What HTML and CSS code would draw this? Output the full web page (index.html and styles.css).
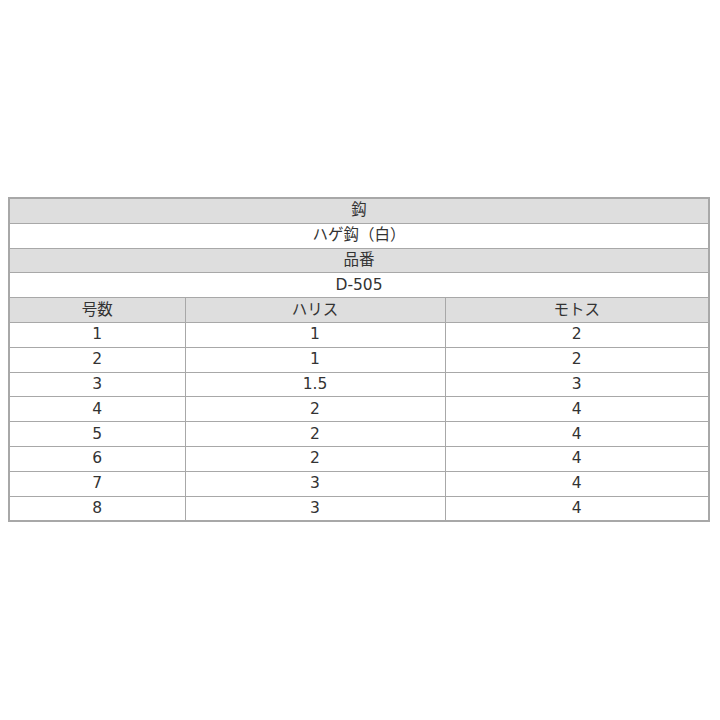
FILE: index.html
```html
<!DOCTYPE html>
<html lang="ja">
<head>
<meta charset="utf-8">
<link rel="stylesheet" href="styles.css">
</head>
<body>
<table class="spec">
  <colgroup>
    <col class="c1">
    <col class="c2">
    <col class="c3">
  </colgroup>
  <tr class="head"><td colspan="3">鈎</td></tr>
  <tr><td colspan="3">ハゲ鈎（白）</td></tr>
  <tr class="head"><td colspan="3">品番</td></tr>
  <tr><td colspan="3">D-505</td></tr>
  <tr class="head"><td>号数</td><td>ハリス</td><td>モトス</td></tr>
  <tr><td>1</td><td>1</td><td>2</td></tr>
  <tr><td>2</td><td>1</td><td>2</td></tr>
  <tr><td>3</td><td>1.5</td><td>3</td></tr>
  <tr><td>4</td><td>2</td><td>4</td></tr>
  <tr><td>5</td><td>2</td><td>4</td></tr>
  <tr><td>6</td><td>2</td><td>4</td></tr>
  <tr><td>7</td><td>3</td><td>4</td></tr>
  <tr><td>8</td><td>3</td><td>4</td></tr>
</table>
</body>
</html>
```
FILE: styles.css
```css
html, body {
  margin: 0;
  background: #ffffff;
}
body {
  padding: 197px 12px 0 8px;
  font-family: "DejaVu Sans", "Noto Sans CJK JP", sans-serif;
  font-size: 15.5px;
  color: #333333;
}
.spec {
  width: 700px;
  border-collapse: collapse;
  table-layout: fixed;
  border: 2px solid #a8a8a8;
}
.spec td {
  border: 1px solid #a8a8a8;
  height: 23.8px;
  padding: 0;
  text-align: center;
  vertical-align: middle;
  line-height: 23px;
}
.spec .head td {
  background: #dedede;
}
.c1 { width: 176px; }
.c2 { width: 260px; }
.c3 { width: 264px; }
```
